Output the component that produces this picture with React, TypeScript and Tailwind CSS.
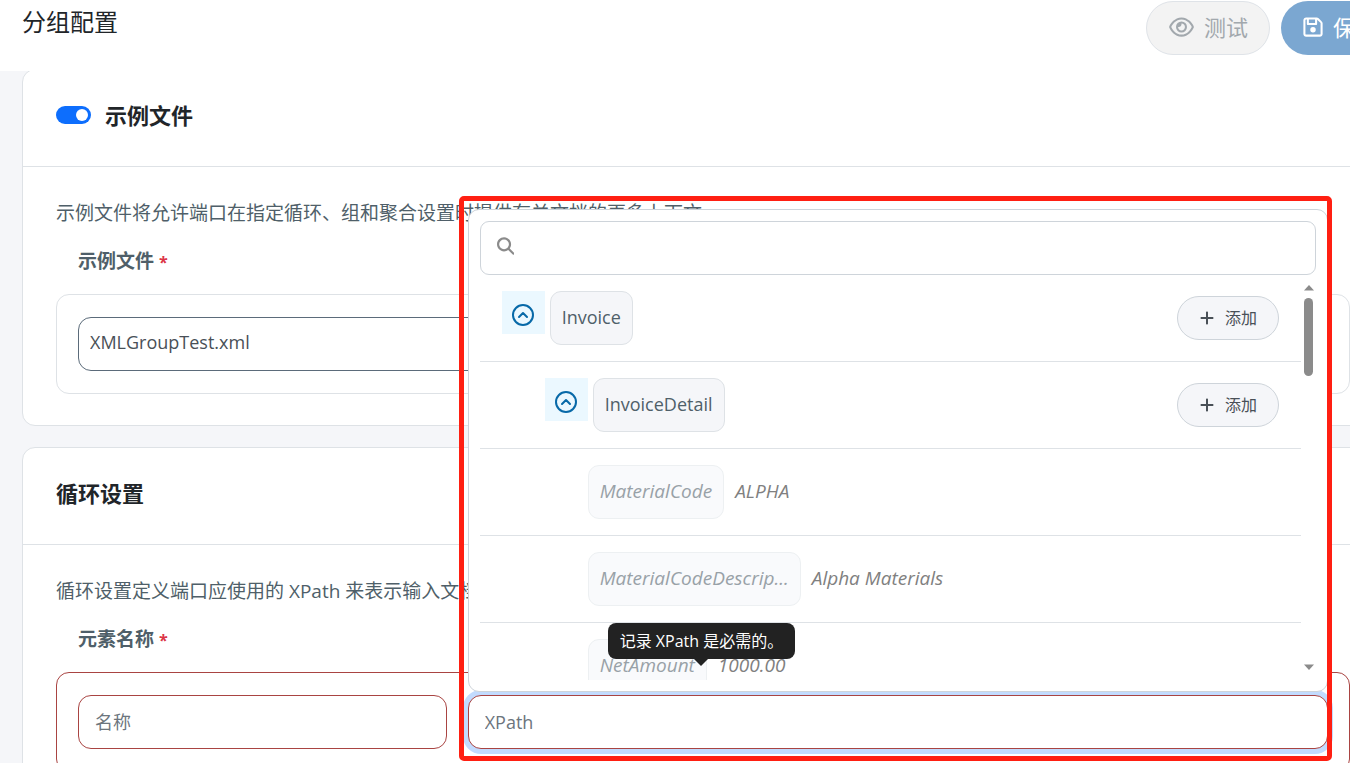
import { InputHTMLAttributes, ReactNode } from 'react';
import { CircleChevronUp } from 'lucide-react';
import {
  FaMagnifyingGlass,
  FaPlus,
  FaRegEye,
  FaRegFloppyDisk
} from 'react-icons/fa6';
import clsx from 'clsx';

interface XmlNode {
  name: string;
  level: number;
  value?: string;
}

const nodes: XmlNode[] = [
  { name: 'Invoice', level: 0 },
  { name: 'InvoiceDetail', level: 1 },
  { name: 'MaterialCode', level: 2, value: 'ALPHA' },
  { name: 'MaterialCodeDescrip...', level: 2, value: 'Alpha Materials' },
  { name: 'NetAmount', level: 2, value: '1000.00' }
];

const indents = ['pl-[22px]', 'pl-[65px]', 'pl-[108px]'];

function Header() {
  return (
    <header className="relative z-10 flex h-[71px] items-start justify-between bg-white pt-px pl-[22px]">
      <h1 className="text-2xl leading-[42px] text-[#212529]">分组配置</h1>

      <div className="flex gap-[11px]">
        <button
          type="button"
          disabled
          className="flex h-[54px] w-[124px] items-center gap-[10px] rounded-full border border-[#dfe3e8] bg-[#f3f3f3] pb-0.5 pl-[22px] text-[22px] whitespace-nowrap text-[#a2a8ad]"
        >
          <FaRegEye className="h-[22px] w-[25px]" />
          测试
        </button>
        <button
          type="button"
          disabled
          className="flex h-[54px] w-[125px] items-center gap-[10px] rounded-full bg-[#7ba7d1] pb-0.5 pl-[22px] text-[22px] whitespace-nowrap text-white"
        >
          <FaRegFloppyDisk className="h-[22px] w-5" />
          保存
        </button>
      </div>
    </header>
  );
}

function Card(props: { header: ReactNode; children: ReactNode }) {
  return (
    <section className="rounded-[13px] border border-[#dee2e6] bg-white">
      <div className="flex h-[97px] items-center border-b border-[#dee2e6] px-[33px] pb-1.5 text-[22px] font-bold text-[#212529]">
        {props.header}
      </div>
      <div className="px-[33px] pt-8 pb-[31px]">{props.children}</div>
    </section>
  );
}

function FieldLabel(props: { htmlFor: string; content: string }) {
  return (
    <label
      htmlFor={props.htmlFor}
      className="text-[19px] leading-7 font-bold text-[#4f5f69]"
    >
      {props.content} <span className="text-base text-[#dc3545]">*</span>
    </label>
  );
}

function InvalidInput(props: InputHTMLAttributes<HTMLInputElement>) {
  return (
    <input
      {...props}
      type="text"
      className={clsx(
        'h-[54px] w-full rounded-[13px] border border-[#a94442] bg-white px-4 text-lg outline-none placeholder:text-[#6c757d]',
        props.className
      )}
    />
  );
}

function NodeRow({ name, level, value }: XmlNode) {
  const isLeaf = value !== undefined;

  return (
    <li
      className={clsx(
        'flex h-[87px] shrink-0 items-center border-b border-[#dee2e6] pr-[22px]',
        indents[level]
      )}
    >
      <div className="flex items-start gap-[5px]">
        {!isLeaf && (
          <button
            type="button"
            aria-label="collapse"
            className="flex h-[43px] w-[43px] items-center justify-center bg-[#ebf8ff] pt-1 text-[#0769a8]"
          >
            <CircleChevronUp />
          </button>
        )}
        <span
          className={clsx(
            'h-[54px] rounded-[11px] border px-[11px] leading-[50px] whitespace-nowrap',
            isLeaf
              ? 'border-[#edf0f2] bg-[#f9fafc] text-[19px] text-[#98a1a7] italic'
              : 'border-[#dee2e6] bg-[#f5f6f9] text-lg text-[#4f5f69]'
          )}
        >
          {name}
        </span>
      </div>

      {isLeaf ? (
        <span className="ml-[11px] pb-0.5 text-[19px] whitespace-nowrap text-[#808080] italic">
          {value}
        </span>
      ) : (
        <button
          type="button"
          className="ml-auto flex h-11 w-[102px] items-center justify-center gap-[10px] rounded-full border border-[#ced4da] bg-[#f5f6f9] text-base text-[#495057]"
        >
          <FaPlus />
          添加
        </button>
      )}
    </li>
  );
}

function Scrollbar() {
  return (
    <div
      className="flex w-[15px] flex-col items-center py-[10px]"
      aria-hidden="true"
    >
      <svg viewBox="0 0 10 6" className="h-[6px] w-[10px] fill-[#8b8b8b]">
        <path d="M0 5.5 5 0l5 5.5z" />
      </svg>
      <div className="mt-[7px] h-[78px] w-[9px] rounded-full bg-[#8b8b8b]" />
      <svg
        viewBox="0 0 10 6"
        className="mt-auto h-[6px] w-[10px] fill-[#8b8b8b]"
      >
        <path d="M0 .5 5 6l5-5.5z" />
      </svg>
    </div>
  );
}

function NodePicker() {
  return (
    <div className="absolute inset-x-0 bottom-full mb-[3px] rounded-[11px] border border-[#ced4da] bg-white p-[11px]">
      <label className="flex h-[54px] items-center gap-3 rounded-[9px] border border-[#ced4da] px-4 pb-1">
        <FaMagnifyingGlass className="h-[18px] w-[18px] text-[#8b8b8b]" />
        <input
          type="text"
          aria-label="search"
          className="w-full text-lg outline-none"
        />
      </label>
      <div className="flex h-[405px]">
        <ul className="flex flex-1 flex-col overflow-hidden">
          {nodes.map(node => (
            <NodeRow key={node.name} {...node} />
          ))}
        </ul>
        <Scrollbar />
      </div>
    </div>
  );
}

function Tooltip(props: { content: string }) {
  return (
    <div
      role="tooltip"
      className="absolute bottom-full left-[140px] mb-9 flex h-9 items-center rounded-lg bg-[#222] px-3 text-base whitespace-nowrap text-white"
    >
      {props.content}
      <svg
        viewBox="0 0 14 7"
        className="absolute top-full left-1/2 h-[7px] w-[14px] -translate-x-1/2 fill-[#222]"
      >
        <path d="M0 0h14L7 7z" />
      </svg>
    </div>
  );
}

export default function App() {
  return (
    <div className="h-screen overflow-hidden bg-[#f5f6f9] font-['Open_Sans','Noto_Sans_CJK_SC',sans-serif]">
      <div className="w-[calc(100%+56px)]">
        <Header />

        <main className="-mt-0.5 flex flex-col gap-[21px] px-[22px]">
          <Card
            header={
              <label className="flex items-center gap-[14px]">
                <input
                  type="checkbox"
                  role="switch"
                  defaultChecked
                  className="flex h-[18px] w-[35px] appearance-none items-center rounded-full bg-[#0d6efd] px-[3px] before:h-3 before:w-3 before:rounded-full before:bg-white checked:justify-end"
                />
                示例文件
              </label>
            }
          >
            <p className="text-[19px] leading-7 text-[#4f5f69]">
              示例文件将允许端口在指定循环、组和聚合设置时提供有关文档的更多上下文
            </p>
            <div className="mt-5 pl-[22px]">
              <FieldLabel htmlFor="sampleFile" content="示例文件" />
            </div>
            <div className="mt-[19px] rounded-[13px] border border-[#dee2e6] px-[21px] py-[22px]">
              <select
                id="sampleFile"
                className="block h-[54px] w-full appearance-none rounded-[13px] border border-[#5b6b7a] bg-white px-[11px] pb-1 text-lg text-[#495057]"
              >
                <option>XMLGroupTest.xml</option>
              </select>
            </div>
          </Card>

          <Card header={<h2>循环设置</h2>}>
            <p className="text-[19px] leading-7 text-[#4f5f69]">
              循环设置定义端口应使用的 XPath 来表示输入文档中的循环
            </p>
            <div className="mt-5 grid grid-cols-[3fr_7fr] gap-[21px] px-[22px]">
              <FieldLabel htmlFor="elementName" content="元素名称" />
              <FieldLabel htmlFor="xpath" content="记录 XPath" />
            </div>
            <div className="mt-[19px] grid grid-cols-[3fr_7fr] gap-[21px] rounded-[13px] border border-[#a94442] px-[21px] py-[22px]">
              <InvalidInput id="elementName" placeholder="名称" />
              <div className="relative">
                <InvalidInput
                  id="xpath"
                  placeholder="XPath"
                  className="ring-5 ring-[#c2dbfe]"
                />
                <NodePicker />
                <Tooltip content="记录 XPath 是必需的。" />
                {/* highlight around the picker and its input */}
                <div className="pointer-events-none absolute -top-[499px] -right-1 -bottom-3 -left-[9px] rounded-[5px] border-5 border-[#ff1f12]" />
              </div>
            </div>
          </Card>
        </main>
      </div>
    </div>
  );
}
